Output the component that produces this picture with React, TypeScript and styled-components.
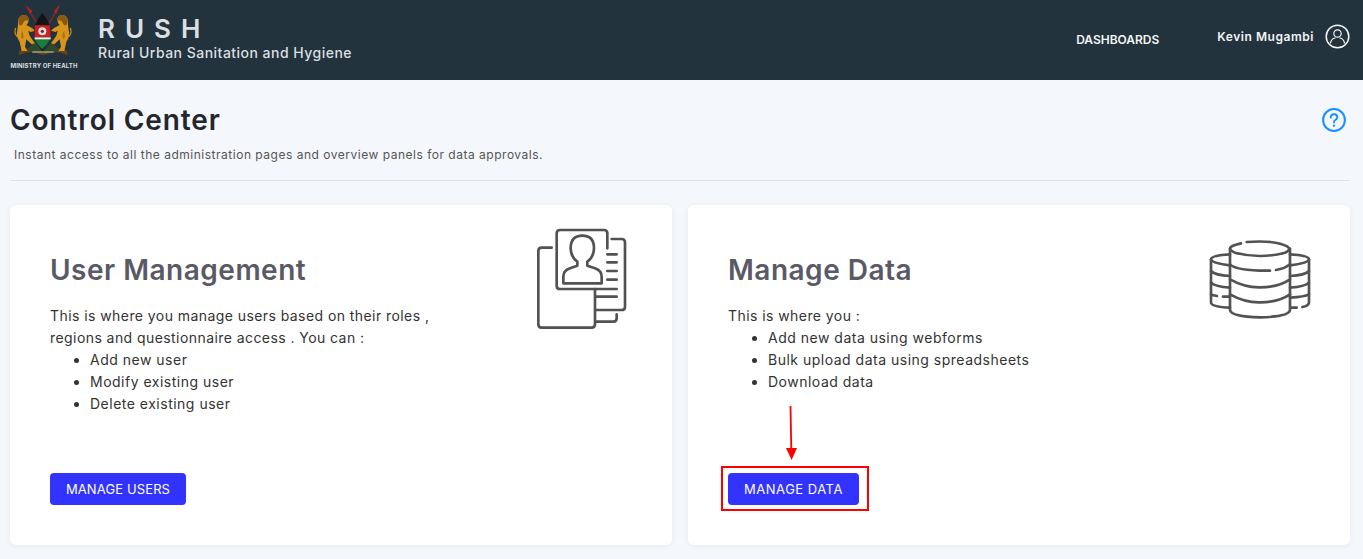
import React from "react";
import styled, { createGlobalStyle } from "styled-components";

const Global = createGlobalStyle`
  html, body { margin: 0; padding: 0; height: 100%; overflow: hidden; background: #f4f7fc; }
  body { font-family: Inter, "Open Sans", "Liberation Sans", sans-serif; color: #333; }
`;

const Header = styled.header`
  height: 80px;
  background: #22333d;
  display: flex;
  align-items: center;
  padding: 0 13px 0 10px;
`;
const Emblem = styled.div`
  width: 68px;
  display: flex;
  flex-direction: column;
  align-items: center;
  align-self: flex-start;
`;
const EmblemPic = styled.svg`
  display: block;
  flex: none;
  width: 70px;
  height: 60px;
`;
const EmblemText = styled.span`
  font-size: 6px;
  line-height: 8px;
  font-weight: 700;
  color: #dcdfe1;
  white-space: nowrap;
  margin-top: 2px;
  letter-spacing: 0.14px;
`;
const Brand = styled.div`
  margin-left: 20px;
  display: flex;
  flex-direction: column;
  margin-top: -4px;
`;
const BrandName = styled.div`
  font-size: 26px;
  line-height: 30px;
  font-weight: 600;
  letter-spacing: 10px;
  color: #dcdfe1;
`;
const BrandSub = styled.div`
  font-size: 14px;
  line-height: 18px;
  font-weight: 500;
  color: #dcdfe1;
  letter-spacing: 0.48px;
`;
const Nav = styled.nav`
  margin-left: auto;
  display: flex;
  align-items: center;
`;
const NavLink = styled.span`
  font-size: 12px;
  font-weight: 600;
  color: #f3f4f5;
  letter-spacing: -0.02px;
  margin-top: -2px;
`;
const UserName = styled.span`
  font-size: 12px;
  font-weight: 600;
  color: #f3f4f5;
  margin-left: 58px;
  letter-spacing: 0.55px;
  margin-top: -8px;
`;
const UserIcon = styled.svg`
  width: 25px;
  height: 25px;
  margin-left: 11px;
  margin-top: -7px;
  display: block;
`;
const Main = styled.main`
  padding: 0 13px 0 10px;
`;
const TitleRow = styled.div`
  display: flex;
  justify-content: space-between;
  align-items: flex-start;
  height: 100px;
  border-bottom: 1px solid #dfe3e8;
`;
const TitleBlock = styled.div`
  padding-top: 22px;
`;
const PageTitle = styled.h1`
  margin: 0;
  font-size: 28px;
  line-height: 36px;
  font-weight: 600;
  color: #25252d;
  letter-spacing: 0.9px;
`;
const PageSub = styled.p`
  margin: 8px 0 0 4px;
  font-size: 12px;
  line-height: 18px;
  color: #555;
  letter-spacing: 0.51px;
`;
const HelpIcon = styled.svg`
  width: 24px;
  height: 24px;
  margin: 28px 4px 0 0;
  display: block;
`;
const Cards = styled.section`
  display: grid;
  grid-template-columns: 662px 662px;
  gap: 16px;
  margin-top: 24px;
`;
const Card = styled.article`
  position: relative;
  height: 340px;
  box-sizing: border-box;
  background: #fff;
  border-radius: 6px;
  box-shadow: 0 1px 6px rgba(30, 40, 60, 0.06);
  padding: 23px 40px 40px;
  display: flex;
  justify-content: space-between;
`;
const CardBody = styled.div`
  display: flex;
  flex-direction: column;
  padding-top: 24px;
`;
const CardTitle = styled.h2`
  margin: 0 0 17px;
  font-size: 28px;
  line-height: 36px;
  font-weight: 600;
  color: #5a5a66;
  letter-spacing: 0.5px;
`;
const CardText = styled.div`
  font-size: 14px;
  line-height: 22px;
  color: #333;
  letter-spacing: 0.43px;
  white-space: nowrap;
`;
const Bullets = styled.ul`
  margin: 0;
  padding-left: 40px;
  font-size: 14px;
  line-height: 22px;
  color: #333;
  letter-spacing: 0.5px;
`;
const ActionButton = styled.button<{ $w: number; $track: number }>`
  margin-top: auto;
  align-self: flex-start;
  height: 32px;
  width: ${(p) => p.$w}px;
  border: 0;
  border-radius: 4px;
  background: #3333ff;
  color: #fff;
  font-family: inherit;
  font-size: 13px;
  letter-spacing: ${(p) => p.$track}px;
`;
const CardIcon = styled.svg<{ $w: number; $h: number; $mr: number; $mt: number }>`
  display: block;
  flex: none;
  width: ${(p) => p.$w}px;
  height: ${(p) => p.$h}px;
  margin-right: ${(p) => p.$mr}px;
  margin-top: ${(p) => p.$mt}px;
  fill: none;
  stroke: #525252;
  stroke-width: 8;
  stroke-linecap: round;
  stroke-linejoin: round;
`;
const RedBox = styled.div`
  position: absolute;
  left: 33px;
  top: 261px;
  width: 148px;
  height: 45px;
  box-sizing: border-box;
  border: 2px solid #f00;
`;
const RedArrow = styled.svg`
  position: absolute;
  left: 94px;
  top: 200px;
  width: 20px;
  height: 56px;
`;

function Lion() {
  return (
    <g>
      <path d="M55 110 Q44 100 50 84" fill="none" stroke="#c98a18" strokeWidth="4" />
      <path d="M57 62 Q60 44 78 45 Q92 50 88 65 Q86 72 82 75 L100 85 L108 92 L95 96 L88 92 Q90 105 95 112 L108 130 L98 133 L82 118 L78 140 L85 153 L68 153 L62 125 Q50 110 55 90 Q58 75 57 62 Z" fill="#d9951a" />
      <path d="M58 60 Q62 44 78 45 Q90 49 88 62 Q80 58 74 66 Q70 78 62 76 Q57 70 58 60 Z" fill="#8a5a14" />
      <path d="M68 92 Q76 100 72 118 L66 112 Z" fill="#a96f12" />
    </g>
  );
}

function CoatOfArms() {
  return (
    <EmblemPic viewBox="30 0 210 180">
      <path d="M83 18 L128 96 M180 18 L136 96" stroke="#a5231f" strokeWidth="3.5" />
      <path d="M83 18 L100 34 L92 42 Z M180 18 L164 34 L172 42 Z" fill="#b3261f" />
      <path d="M62 152 Q90 140 112 148 L132 160 L152 148 Q174 140 204 152 L206 166 Q178 152 152 158 Q132 170 112 158 Q86 152 58 166 Z" fill="#6a421b" />
      <path d="M85 150 L105 125 L130 155 L100 158 Z M179 150 L159 125 L134 155 L164 158 Z" fill="#2f4a2b" />
      <path d="M100 156 H164" stroke="#d8c9a0" strokeWidth="3" />
      <Lion />
      <g transform="translate(264 0) scale(-1 1)">
        <Lion />
      </g>
      <path d="M130 40 Q150 60 157 96 Q150 128 130 152 Q110 128 105 96 Q110 60 130 40 Z" fill="#141414" />
      <path d="M108 76 H152 Q156 90 155 112 H107 Q105 90 108 76 Z" fill="#c8211f" />
      <path d="M108 117 H153 Q146 134 130 148 Q114 134 108 117 Z" fill="#1c7a3a" />
      <path d="M107 112 H155 V118 H107 Z" fill="#ededed" />
      <circle cx="130" cy="94" r="12" fill="#dcdcdc" />
      <circle cx="130" cy="94" r="5" fill="#8c1e1c" />
    </EmblemPic>
  );
}

function UserDocsIcon() {
  return (
    <CardIcon $w={120} $h={125} $mr={-8} $mt={-13} viewBox="0 0 360 375">
      <path d="M262 100 V55 Q262 45 252 45 H120 Q110 45 110 55 V212 Q110 222 120 222 H290" />
      <path d="M262 118 H290 M262 142 H290 M262 168 H290 M262 194 H290 M228 245 H290" />
      <path d="M275 72 H305 Q315 72 315 82 V275 Q315 285 305 285 H228" />
      <path d="M228 320 H280 Q290 320 290 310 V298" />
      <path d="M95 98 H65 Q55 98 55 108 V328 Q55 338 65 338 H215 Q225 338 225 328 V222" />
      <path d="M130 205 V185 Q130 167 150 160 L172 152 V140 Q152 125 152 100 Q152 62 187 62 Q222 62 222 100 Q222 125 202 140 V152 L225 160 Q245 167 245 185 V205 Z" />
    </CardIcon>
  );
}

function DatabaseIcon() {
  return (
    <CardIcon $w={130} $h={105} $mr={-15} $mt={-2} viewBox="0 0 390 315">
      <path d="M155 48 Q245 42 278 62 Q290 72 270 80 Q195 100 120 80 Q95 70 112 60 Q120 56 138 52" />
      <path d="M105 68 V252 Q108 272 195 274 Q282 272 285 252 V68" />
      <path d="M105 115 Q125 135 225 134 M243 132 Q270 128 285 115" />
      <path d="M105 160 Q150 185 195 184 Q250 184 285 160" />
      <path d="M105 205 Q150 230 195 229 Q250 229 285 205" />
      <path d="M105 85 Q48 88 48 100 Q50 112 105 118" />
      <path d="M48 100 V230 Q50 243 105 245" />
      <path d="M48 135 Q60 148 105 150 M48 170 Q60 182 105 185 M48 205 Q52 208 66 210 M84 212 H105" />
      <path d="M285 85 Q342 88 342 100 Q340 112 285 118" />
      <path d="M342 100 V230 Q340 240 322 243 M305 245 H288" />
      <path d="M342 135 Q330 148 285 150 M342 170 Q330 182 285 185 M342 205 Q330 212 285 215" />
    </CardIcon>
  );
}

export default function App() {
  return (
    <>
      <Global />
      <Header>
        <Emblem>
          <CoatOfArms />
          <EmblemText>MINISTRY OF HEALTH</EmblemText>
        </Emblem>
        <Brand>
          <BrandName>RUSH</BrandName>
          <BrandSub>Rural Urban Sanitation and Hygiene</BrandSub>
        </Brand>
        <Nav>
          <NavLink>DASHBOARDS</NavLink>
          <UserName>Kevin Mugambi</UserName>
          <UserIcon viewBox="0 0 25 25" fill="none" stroke="#f5f5f5">
            <circle cx="12.5" cy="12.5" r="11.3" strokeWidth="1.5" />
            <circle cx="12.5" cy="9.5" r="3.7" strokeWidth="1.2" />
            <path d="M5.5 19 Q6.5 14.5 10 14 M19.5 19 Q18.5 14.5 15 14" strokeWidth="1.2" strokeLinecap="round" />
          </UserIcon>
        </Nav>
      </Header>
      <Main>
        <TitleRow>
          <TitleBlock>
            <PageTitle>Control Center</PageTitle>
            <PageSub>Instant access to all the administration pages and overview panels for data approvals.</PageSub>
          </TitleBlock>
          <HelpIcon viewBox="0 0 24 24" fill="none">
            <circle cx="12" cy="12" r="10.9" stroke="#1890ff" strokeWidth="2" />
            <path d="M8.7 9.6 Q8.8 6.3 12 6.3 Q15.3 6.3 15.3 9.2 Q15.3 10.8 13.6 11.8 Q12 12.7 12 14.6" stroke="#1890ff" strokeWidth="1.9" strokeLinecap="round" />
            <circle cx="12" cy="17.6" r="1.2" fill="#1890ff" />
          </HelpIcon>
        </TitleRow>
        <Cards>
          <Card>
            <CardBody>
              <CardTitle>User Management</CardTitle>
              <CardText>
                This is where you manage users based on their roles ,
                <br />
                regions and questionnaire access . You can :
              </CardText>
              <Bullets>
                <li>Add new user</li>
                <li>Modify existing user</li>
                <li>Delete existing user</li>
              </Bullets>
              <ActionButton $w={136} $track={0.12}>MANAGE USERS</ActionButton>
            </CardBody>
            <UserDocsIcon />
          </Card>
          <Card>
            <CardBody>
              <CardTitle>Manage Data</CardTitle>
              <CardText>This is where you :</CardText>
              <Bullets>
                <li>Add new data using webforms</li>
                <li>Bulk upload data using spreadsheets</li>
                <li>Download data</li>
              </Bullets>
              <ActionButton $w={131} $track={0.5}>MANAGE DATA</ActionButton>
            </CardBody>
            <DatabaseIcon />
            <RedArrow viewBox="0 0 20 56">
              <path d="M8.5 1 L9.3 45" stroke="#f00" strokeWidth="1.8" />
              <path d="M4 43 H15 L9.6 55 Z" fill="#f00" />
            </RedArrow>
            <RedBox />
          </Card>
        </Cards>
      </Main>
    </>
  );
}
